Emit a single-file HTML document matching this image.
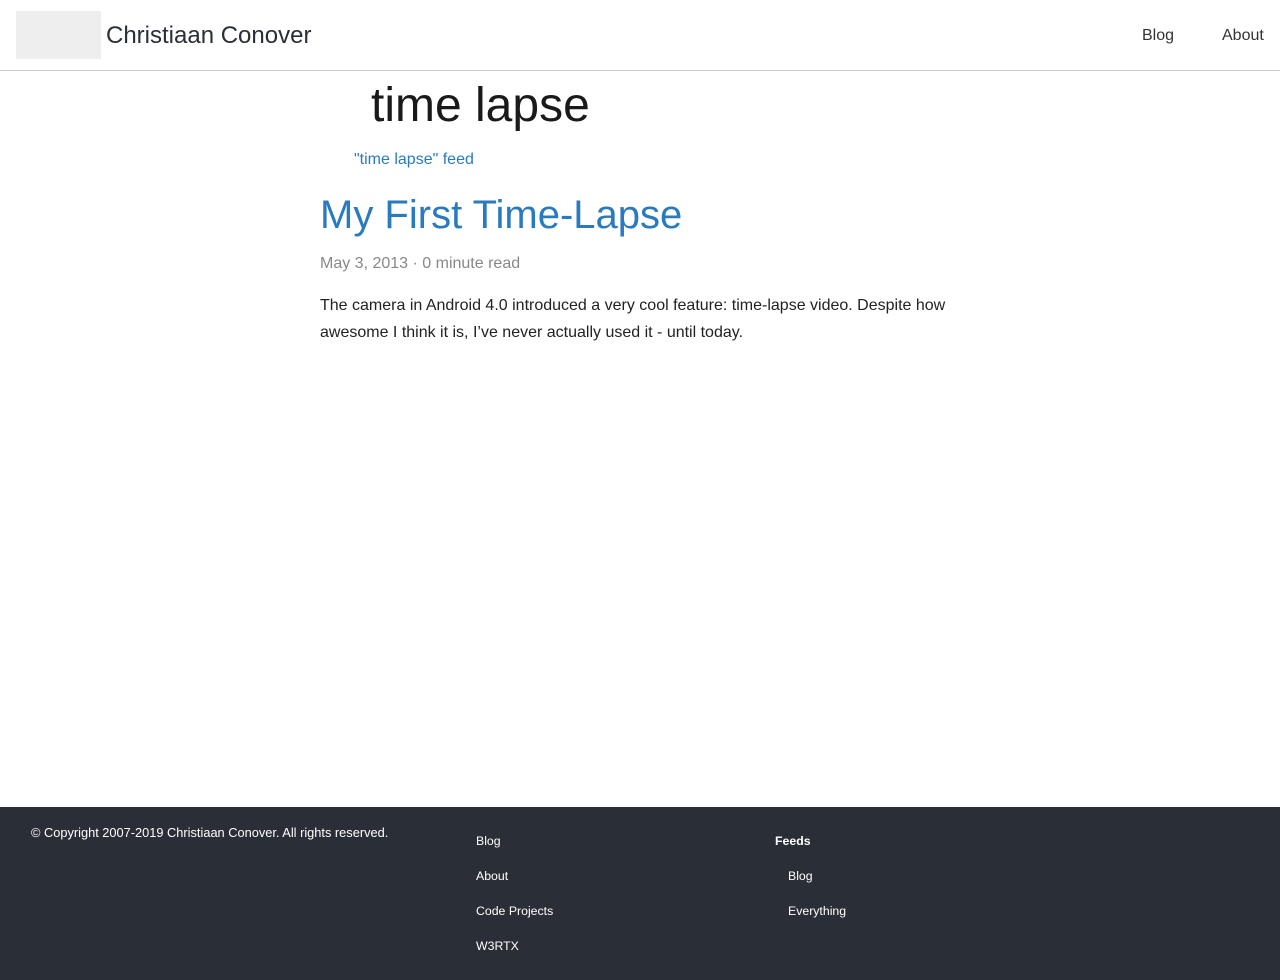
<!DOCTYPE html>
<html><head><meta charset="utf-8"><style>
body{margin:0;width:1280px;height:980px;font-family:"Liberation Sans",sans-serif;background:#fff;position:relative;overflow:hidden}
.a{position:absolute;white-space:nowrap}
header{position:absolute;top:0;left:0;width:1280px;height:70px;border-bottom:1px solid #ccc}
.logo{position:absolute;left:16px;top:11px;width:85px;height:48px;background:#eee}
footer{position:absolute;left:0;top:807px;width:1280px;height:173px;background:#2a2e36;color:#fff;font-size:13px}
.f{position:absolute;white-space:nowrap;font-size:12.3px;color:#fff}
</style></head><body>
<header>
<div class="logo"></div>
<div class="a" style="left:106px;top:22px;font-size:24px;color:#2a2e36">Christiaan Conover</div>
<div class="a" style="left:1142px;top:27px;font-size:16px;color:#333">Blog</div>
<div class="a" style="left:1222px;top:27px;font-size:16px;color:#333">About</div>
</header>
<div class="a" style="left:371px;top:78px;font-size:48px;color:#1a1a1a">time lapse</div>
<div class="a" style="left:354px;top:151px;font-size:16px;color:#2a7ac0">"time lapse" feed</div>
<div class="a" style="left:320px;top:193px;font-size:40px;color:#2a7ac0">My First Time-Lapse</div>
<div class="a" style="left:320px;top:255px;font-size:16px;color:#888">May 3, 2013 · 0 minute read</div>
<div class="a" style="left:320px;top:292px;font-size:16px;line-height:27px;color:#222;white-space:normal;width:640px">The camera in Android 4.0 introduced a very cool feature: time-lapse video. Despite how awesome I think it is, I’ve never actually used it - until today.</div>
<footer>
<div class="f" style="left:31px;top:18px;font-size:12.8px">© Copyright 2007-2019 Christiaan Conover. All rights reserved.</div>
<div class="f" style="left:476px;top:27px">Blog</div>
<div class="f" style="left:476px;top:62px">About</div>
<div class="f" style="left:476px;top:97px">Code Projects</div>
<div class="f" style="left:476px;top:132px">W3RTX</div>
<div class="f" style="left:775px;top:27px;font-weight:bold">Feeds</div>
<div class="f" style="left:788px;top:62px">Blog</div>
<div class="f" style="left:788px;top:97px">Everything</div>
</footer>
</body></html>
